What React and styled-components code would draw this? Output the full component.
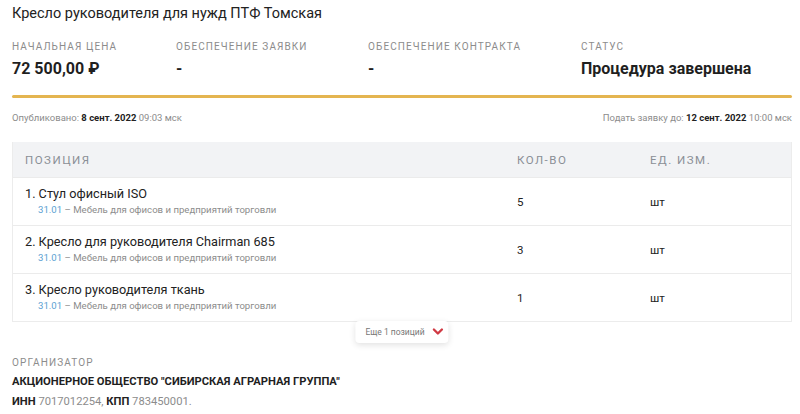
import styled, { createGlobalStyle } from "styled-components";

const Global = createGlobalStyle`
  body {
    margin: 0;
    font-family: Roboto, "Liberation Sans", sans-serif;
    color: #222;
    background: #fff;
  }
`;

const Page = styled.div`
  width: 780px;
  padding: 4px 8px 0 12px;
`;

const Title = styled.h1`
  margin: 0;
  font-size: 14.5px;
  font-weight: 400;
  line-height: 20px;
  color: #222;
`;

const Summary = styled.div`
  display: grid;
  grid-template-columns: 164px 192px 213px 1fr;
  margin-top: 17px;
`;

const Label = styled.div`
  font-size: 10px;
  line-height: 12px;
  letter-spacing: 1.1px;
  text-transform: uppercase;
  color: #8c8c8c;
`;

const Value = styled.div`
  margin-top: 6px;
  font-size: 16px;
  line-height: 20px;
  font-weight: 700;
  color: #1f1f1f;
`;

const Progress = styled.div`
  height: 3px;
  border-radius: 2px;
  background: #e4b550;
  margin-top: 16px;
`;

const Dates = styled.div`
  display: flex;
  justify-content: space-between;
  margin-top: 13px;
  font-size: 9.5px;
  line-height: 14px;
  color: #8c8c8c;
`;

const Strong = styled.b`
  font-weight: 700;
  color: #222;
`;

const TableWrap = styled.div`
  position: relative;
  margin-top: 17px;
`;

const Table = styled.div`
  border: 1px solid #ececec;
  border-top: none;
`;

const Row = styled.div`
  display: grid;
  grid-template-columns: 492px 133px 1fr;
  align-items: center;
  padding-left: 12px;
  height: ${(p) => (p.$head ? "35px" : "47px")};
  background: ${(p) => (p.$head ? "#f2f3f5" : "#fff")};
  border-top: ${(p) => (p.$head ? "none" : "1px solid #ebebeb")};
`;

const HeadCell = styled.div`
  font-size: 11.5px;
  letter-spacing: 1.5px;
  color: #8a8f96;
`;

const Name = styled.div`
  font-size: 12.7px;
  line-height: 16px;
  color: #222;
`;

const Okpd = styled.div`
  padding-left: 13px;
  margin-top: 1px;
  font-size: 9.6px;
  line-height: 14px;
  color: #8c8c8c;
`;

const Code = styled.span`
  color: #5b9fd2;
`;

const Cell = styled.div`
  font-size: 11.5px;
  color: #222;
`;

const More = styled.button`
  position: absolute;
  left: 50%;
  bottom: -21px;
  transform: translateX(-50%);
  display: flex;
  align-items: center;
  gap: 8px;
  height: 22px;
  padding: 0 5px 0 10px;
  border: none;
  border-radius: 4px;
  background: #fff;
  box-shadow: 0 2px 6px rgba(0, 0, 0, 0.12);
  font-family: inherit;
  font-size: 8.5px;
  color: #777;
  cursor: pointer;
`;

const Organizer = styled.div`
  margin-top: 35px;
`;

const OrgName = styled.div`
  margin-top: 4px;
  font-size: 11.2px;
  line-height: 18px;
  font-weight: 700;
  color: #1f1f1f;
`;

const Requisites = styled.div`
  margin-top: 2px;
  font-size: 11.2px;
  line-height: 18px;
  color: #8c8c8c;
`;

const items = [
  { name: "1. Стул офисный ISO", qty: 5 },
  { name: "2. Кресло для руководителя Chairman 685", qty: 3 },
  { name: "3. Кресло руководителя ткань", qty: 1 },
];

const Chevron = () => (
  <svg width="11" height="8" viewBox="0 0 11 8">
    <path d="M1.5 1.5 L5.5 5.5 L9.5 1.5" fill="none" stroke="#d03a44" strokeWidth="2.4" strokeLinecap="round" strokeLinejoin="round" />
  </svg>
);

export default function App() {
  return (
    <Page>
      <Global />
      <Title>Кресло руководителя для нужд ПТФ Томская</Title>
      <Summary>
        <div>
          <Label>Начальная цена</Label>
          <Value>72 500,00 ₽</Value>
        </div>
        <div>
          <Label>Обеспечение заявки</Label>
          <Value>-</Value>
        </div>
        <div>
          <Label>Обеспечение контракта</Label>
          <Value>-</Value>
        </div>
        <div>
          <Label>Статус</Label>
          <Value>Процедура завершена</Value>
        </div>
      </Summary>
      <Progress />
      <Dates>
        <span>
          Опубликовано: <Strong>8 сент. 2022</Strong> 09:03 мск
        </span>
        <span>
          Подать заявку до: <Strong>12 сент. 2022</Strong> 10:00 мск
        </span>
      </Dates>
      <TableWrap>
        <Table>
          <Row $head>
            <HeadCell>ПОЗИЦИЯ</HeadCell>
            <HeadCell>КОЛ-ВО</HeadCell>
            <HeadCell>ЕД. ИЗМ.</HeadCell>
          </Row>
          {items.map((it) => (
            <Row key={it.name}>
              <div>
                <Name>{it.name}</Name>
                <Okpd>
                  <Code>31.01</Code> – Мебель для офисов и предприятий торговли
                </Okpd>
              </div>
              <Cell>{it.qty}</Cell>
              <Cell>шт</Cell>
            </Row>
          ))}
        </Table>
        <More>
          Еще 1 позиций
          <Chevron />
        </More>
      </TableWrap>
      <Organizer>
        <Label>Организатор</Label>
        <OrgName>АКЦИОНЕРНОЕ ОБЩЕСТВО "СИБИРСКАЯ АГРАРНАЯ ГРУППА"</OrgName>
        <Requisites>
          <Strong>ИНН</Strong> 7017012254, <Strong>КПП</Strong> 783450001.
        </Requisites>
      </Organizer>
    </Page>
  );
}
